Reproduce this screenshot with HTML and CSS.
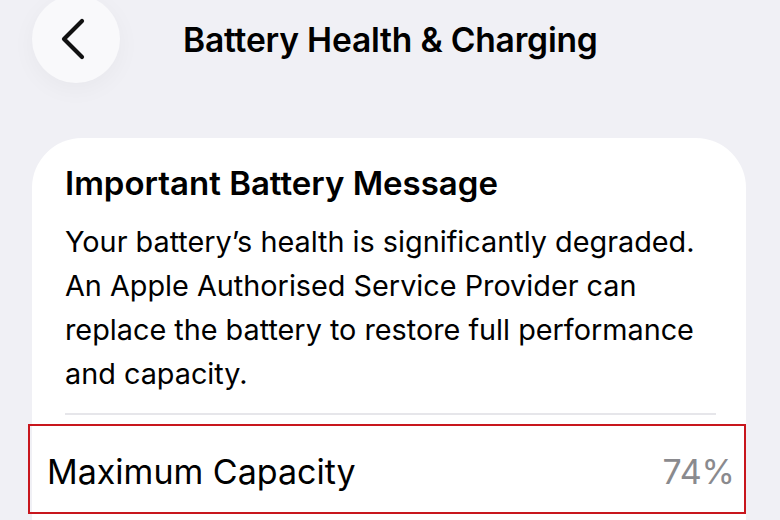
FILE: index.html
```html
<!DOCTYPE html>
<html lang="en">
<head>
  <meta charset="UTF-8">
  <meta name="viewport" content="width=device-width, initial-scale=1.0">
  <title>Battery Health &amp; Charging</title>
  <link rel="stylesheet" href="styles.css">
</head>
<body>
  <header class="barra">
    <button class="atras" aria-label="Back">
      <svg width="26" height="42" viewBox="0 0 26 42">
        <path d="M22 3 L4 21 L22 39" fill="none" stroke="#111" stroke-width="4.2" stroke-linecap="round" stroke-linejoin="round"/>
      </svg>
    </button>
    <h1 class="titulo">Battery Health &amp; Charging</h1>
  </header>

  <section class="tarjeta">
    <h2 class="aviso-titulo">Important Battery Message</h2>
    <p class="aviso-texto">Your battery’s health is significantly degraded. An Apple Authorised Service Provider can replace the battery to restore full performance and capacity.</p>
    <div class="separador"></div>
    <div class="fila marcada">
      <span class="fila-nombre">Maximum Capacity</span>
      <span class="fila-valor">74%</span>
    </div>
  </section>
</body>
</html>
```

FILE: styles.css
```css
body {
  margin: 0;
  padding: 0;
  width: 780px;
  height: 520px;
  overflow: hidden;
  background-color: #f0f0f5;
  font-family: Inter, "Noto Sans", sans-serif;
  color: #000;
}

.barra {
  display: flex;
  align-items: center;
  height: 78px;
  padding-left: 32px;
}

.atras {
  width: 88px;
  height: 88px;
  flex-shrink: 0;
  border: none;
  border-radius: 50%;
  background: #f9f9fb;
  box-shadow: 0 6px 24px rgba(0, 0, 0, 0.04);
  display: flex;
  justify-content: center;
  align-items: center;
  padding: 0 7px 0 0;
}

.titulo {
  margin: 0 0 0 63px;
  font-size: 33.6px;
  font-weight: 600;
  letter-spacing: -0.2px;
}

.tarjeta {
  margin: 60px 34px 0 32px;
  background: #fff;
  border-radius: 50px 50px 0 0;
  padding: 25px 0 0 33px;
  height: 360px;
}

.aviso-titulo {
  margin: 0;
  font-size: 33px;
  font-weight: 600;
  line-height: 40px;
}

.aviso-texto {
  margin: 17px 30px 0 0;
  font-size: 28.8px;
  line-height: 44px;
}

.separador {
  height: 2px;
  background: #e6e6ea;
  margin: 17px 30px 0 0;
}

.fila {
  display: flex;
  justify-content: space-between;
  align-items: flex-start;
  height: 86px;
  box-sizing: content-box;
  margin: 9px 0 0 -37px;
  padding: 0 9px 0 17px;
  font-size: 34px;
  line-height: 41px;
}

.fila span {
  margin-top: 25px;
}

.marcada {
  border: 2px solid #c8161d;
}

.fila-valor {
  color: #8a8a8e;
}
```
